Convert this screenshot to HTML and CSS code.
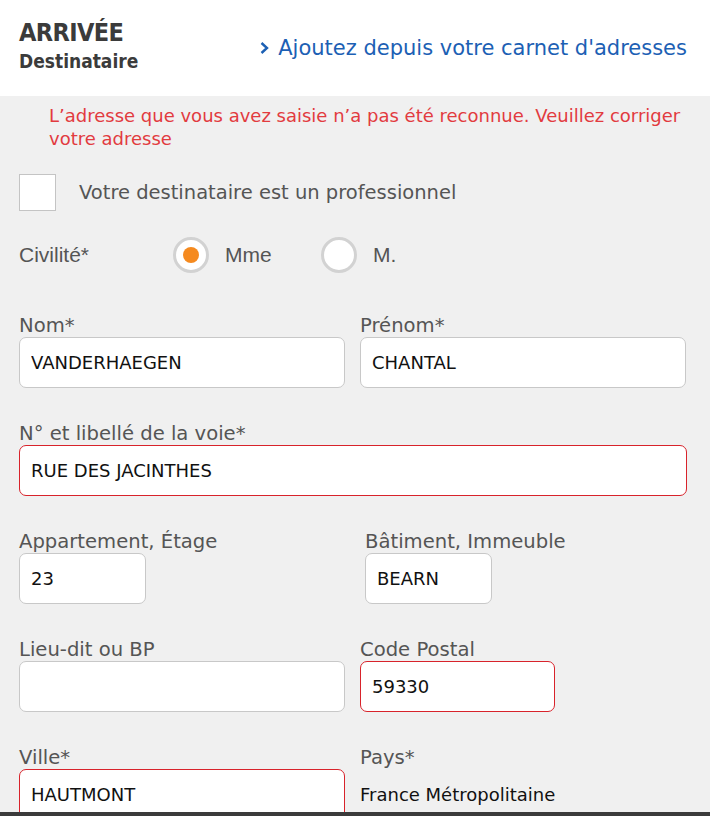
FILE: index.html
```html
<!DOCTYPE html>
<html lang="fr">
<head>
    <meta charset="UTF-8">
    <meta name="viewport" content="width=device-width, initial-scale=1.0">
    <title>Arrivée - Destinataire</title>
    <link rel="stylesheet" href="styles.css">
</head>
<body>
    <header class="head">
        <div class="head-title">
            <h1>ARRIVÉE</h1>
            <h2>Destinataire</h2>
        </div>
        <a class="book-link" href="#">
            <svg class="chevron" width="11" height="14" viewBox="0 0 11 14"><path d="M2.5 2 L8 7 L2.5 12" fill="none" stroke="currentColor" stroke-width="2.4"/></svg>
            Ajoutez depuis votre carnet d'adresses
        </a>
    </header>

    <form class="address-form">
        <p class="error">L’adresse que vous avez saisie n’a pas été reconnue. Veuillez corriger votre adresse</p>

        <label class="check">
            <span class="check-box"></span>
            Votre destinataire est un professionnel
        </label>

        <div class="civility">
            <span class="civility-label">Civilité*</span>
            <span class="radio-option"><span class="radio checked"></span>Mme</span>
            <span class="radio-option"><span class="radio"></span>M.</span>
        </div>

        <div class="row">
            <div class="field">
                <label>Nom*</label>
                <input type="text" value="VANDERHAEGEN">
            </div>
            <div class="field">
                <label>Prénom*</label>
                <input type="text" value="CHANTAL">
            </div>
        </div>

        <div class="row single">
            <div class="field">
                <label>N° et libellé de la voie*</label>
                <input class="invalid" type="text" value="RUE DES JACINTHES">
            </div>
        </div>

        <div class="row">
            <div class="field">
                <label>Appartement, Étage</label>
                <input class="short" type="text" value="23">
            </div>
            <div class="field shifted">
                <label>Bâtiment, Immeuble</label>
                <input class="short" type="text" value="BEARN">
            </div>
        </div>

        <div class="row">
            <div class="field">
                <label>Lieu-dit ou BP</label>
                <input type="text" value="">
            </div>
            <div class="field">
                <label>Code Postal</label>
                <input class="invalid medium" type="text" value="59330">
            </div>
        </div>

        <div class="row">
            <div class="field">
                <label>Ville*</label>
                <input class="invalid" type="text" value="HAUTMONT">
            </div>
            <div class="field">
                <label>Pays*</label>
                <div class="static-value">France Métropolitaine</div>
            </div>
        </div>
    </form>

    <div class="screen-edge"></div>
</body>
</html>
```
FILE: styles.css
```css
body {
    margin: 0;
    background-color: #f0f0f0;
    font-family: "DejaVu Sans", Verdana, sans-serif;
    color: #555;
}
.head {
    background-color: #fff;
    height: 96px;
    display: flex;
    justify-content: space-between;
    align-items: flex-start;
    padding: 0 23px 0 19px;
    box-sizing: border-box;
}
.head-title {
    padding-top: 18px;
    color: #3b3b3b;
    font-family: "Liberation Sans Narrow", "DejaVu Sans Condensed", sans-serif;
}
.head-title h1 {
    margin: 0;
    font-size: 25px;
    line-height: 30px;
    letter-spacing: -0.6px;
}
.head-title h2 {
    margin: 0;
    font-size: 19px;
    line-height: 26px;
}
.book-link {
    margin-top: 35px;
    color: #1c60b4;
    text-decoration: none;
    font-size: 21px;
    line-height: 26px;
    display: flex;
    align-items: center;
    gap: 8px;
}
.address-form {
    padding: 8px 23px 0 19px;
}
.error {
    margin: 0 0 24px 30px;
    color: #e23b3f;
    font-size: 18px;
    line-height: 23px;
}
.check {
    display: flex;
    align-items: center;
    gap: 23px;
    font-size: 19.5px;
    margin-bottom: 26px;
}
.check-box {
    width: 35px;
    height: 35px;
    background-color: #fff;
    border: 1px solid #c4c4c4;
}
.civility {
    display: flex;
    align-items: center;
    height: 36px;
    margin-bottom: 42px;
    font-family: "Liberation Sans", Arial, sans-serif;
    font-size: 21px;
}
.civility-label {
    width: 154px;
}
.radio-option {
    display: flex;
    align-items: center;
    gap: 16px;
    width: 148px;
    font-size: 21px;
}
.radio {
    width: 36px;
    height: 36px;
    box-sizing: border-box;
    border: 3px solid #d2d2d2;
    border-radius: 50%;
    background-color: #fff;
    display: flex;
    align-items: center;
    justify-content: center;
}
.radio.checked::after {
    content: "";
    width: 16px;
    height: 16px;
    border-radius: 50%;
    background-color: #f58a1f;
}
.row {
    display: grid;
    grid-template-columns: 326px 326px;
    gap: 15px;
    margin-bottom: 35px;
}
.row.single {
    grid-template-columns: 668px;
}
.field label {
    display: block;
    font-size: 19.6px;
    line-height: 22px;
}
.field.shifted {
    padding-left: 5px;
}
input {
    display: block;
    width: 100%;
    height: 51px;
    box-sizing: border-box;
    border: 1px solid #c8c8c8;
    border-radius: 7px;
    background-color: #fff;
    padding: 0 11px;
    font-family: "DejaVu Sans", Verdana, sans-serif;
    font-size: 18px;
    color: #111;
}
input.invalid {
    border-color: #d8232b;
}
input.short {
    width: 127px;
}
input.medium {
    width: 195px;
}
.static-value {
    height: 51px;
    display: flex;
    align-items: center;
    font-size: 18px;
    color: #111;
}
.screen-edge {
    position: fixed;
    left: 0;
    right: 0;
    bottom: 0;
    height: 4px;
    background-color: #3b3b3b;
}
```
